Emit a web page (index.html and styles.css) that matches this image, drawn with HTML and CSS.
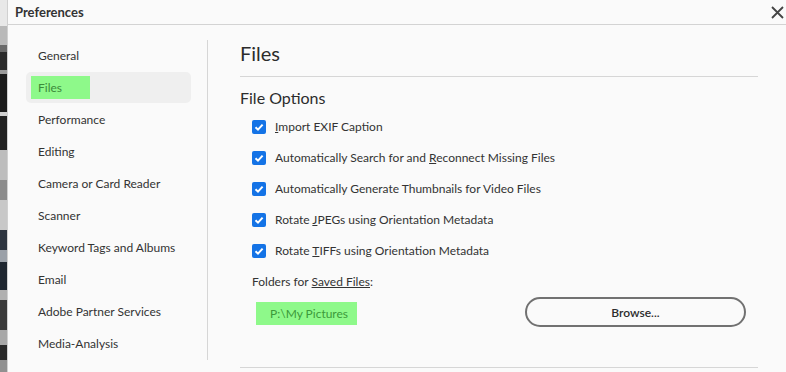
FILE: index.html
```html
<!DOCTYPE html>
<html lang="en">
<head>
    <meta charset="UTF-8">
    <title>Preferences</title>
    <link rel="stylesheet" href="styles.css">
</head>
<body>
    <div class="backdrop"></div>
    <div class="dialog">
        <div class="titlebar">
            <span class="title">Preferences</span>
            <span class="close">
                <svg width="13" height="13" viewBox="0 0 13 13"><path d="M1 1L12 12M12 1L1 12" stroke="#444" stroke-width="1.8" fill="none"/></svg>
            </span>
        </div>
        <div class="main">
            <ul class="sidebar">
                <li>General</li>
                <li class="selected"><span class="mark">Files</span></li>
                <li>Performance</li>
                <li>Editing</li>
                <li>Camera or Card Reader</li>
                <li>Scanner</li>
                <li>Keyword Tags and Albums</li>
                <li>Email</li>
                <li>Adobe Partner Services</li>
                <li>Media-Analysis</li>
            </ul>
            <div class="content">
                <h1>Files</h1>
                <h2>File Options</h2>
                <div class="options">
                    <label class="option"><span class="check"></span><span><u>I</u>mport EXIF Caption</span></label>
                    <label class="option"><span class="check"></span><span>Automatically Search for and <u>R</u>econnect Missing Files</span></label>
                    <label class="option"><span class="check"></span><span>Automatically Generate Thumbnails for Video Files</span></label>
                    <label class="option"><span class="check"></span><span>Rotate <u>J</u>PEGs using Orientation Metadata</span></label>
                    <label class="option"><span class="check"></span><span>Rotate <u>T</u>IFFs using Orientation Metadata</span></label>
                </div>
                <div class="folders">Folders for <u>Saved Files</u>:</div>
                <div class="folder-row">
                    <span class="path">P:\My Pictures</span>
                    <button class="browse">Browse...</button>
                </div>
                <div class="bottom-line"></div>
            </div>
        </div>
    </div>
</body>
</html>
```

FILE: styles.css
```css
body {
    margin: 0;
    display: flex;
    height: 372px;
    overflow: hidden;
    font-family: Lato, 'Open Sans', sans-serif;
    color: #2c2c2c;
    background: #fafafa;
}
.backdrop {
    width: 7px;
    flex: none;
    background: linear-gradient(to bottom,
        #e8e8e8 0 26px, #b9b9b9 26px 45px, #6a6a6a 45px 52px, #2b2b2b 52px 70px,
        #9a9a9a 70px 74px, #1c1c1c 74px 112px, #d0d0d0 112px 116px, #222 116px 150px,
        #bdbdbd 150px 180px, #8c8c8c 180px 200px, #c8c8c8 200px 230px, #2e3540 230px 250px,
        #9aa0a8 250px 262px, #1f2630 262px 290px, #b0b0b0 290px 300px, #3a3a3a 300px 330px,
        #a8a8a8 330px 345px, #2a2a2a 345px 360px, #909090 360px);
}
.dialog {
    flex: 1;
    border-left: 1px solid #d0d0d0;
    background: #fafafa;
}
.titlebar {
    height: 24px;
    border-bottom: 1px solid #d3d3d3;
    display: flex;
    align-items: center;
    justify-content: space-between;
    padding: 0 2px 0 7px;
}
.title {
    font-size: 13px;
    font-weight: bold;
    color: #333;
}
.close {
    display: flex;
}
.main {
    display: flex;
}
.sidebar {
    list-style: none;
    margin: 15px 0 0;
    padding: 0 16px 0 18px;
    width: 165px;
    border-right: 1px solid #d6d6d6;
    height: 320px;
}
.sidebar li {
    height: 32px;
    line-height: 32px;
    padding-left: 12px;
    font-size: 12px;
    color: #333;
}
.sidebar li.selected {
    background: #efefef;
    border-radius: 5px;
    height: 31px;
    margin-bottom: 1px;
    padding-left: 5px;
    display: flex;
    align-items: center;
}
.mark {
    background: #8ef98a;
    color: #3c8a3a;
    height: 23px;
    line-height: 23px;
    width: 52px;
    padding-left: 7px;
}
.content {
    flex: 1;
    padding: 0 28px 0 32px;
}
h1 {
    margin: 0;
    padding-top: 16px;
    height: 35px;
    font-size: 20px;
    font-weight: normal;
    color: #2c2c2c;
    border-bottom: 1px solid #d6d6d6;
}
h2 {
    margin: 0;
    padding-top: 11px;
    font-size: 16px;
    font-weight: normal;
    color: #2c2c2c;
    height: 23px;
}
.options {
    padding-left: 12px;
}
.option {
    display: flex;
    align-items: center;
    gap: 9px;
    height: 31px;
    font-size: 12px;
    color: #333;
}
.check {
    width: 14px;
    height: 14px;
    border-radius: 2px;
    background: #1473e6 url("data:image/svg+xml,%3Csvg xmlns='http://www.w3.org/2000/svg' viewBox='0 0 14 14'%3E%3Cpath d='M3.5 7.2L6 9.6L10.6 4.6' stroke='white' stroke-width='2' fill='none'/%3E%3C/svg%3E") center/14px no-repeat;
}
.folders {
    padding-left: 12px;
    margin-top: 8px;
    font-size: 12px;
    color: #333;
}
.folder-row {
    display: flex;
    align-items: center;
    justify-content: space-between;
    padding-left: 16px;
    margin-top: 8px;
}
.path {
    background: #8ef98a;
    color: #3c9a3a;
    font-size: 12px;
    height: 23px;
    line-height: 23px;
    padding: 0 9px 0 14px;
}
.browse {
    width: 221px;
    height: 30px;
    margin-right: 12px;
    margin-bottom: 2px;
    border: 2px solid #717171;
    border-radius: 15px;
    background: #fafafa;
    font-family: inherit;
    font-size: 12px;
    font-weight: 600;
    color: #2c2c2c;
}
.bottom-line {
    margin-top: 38px;
    border-top: 1px solid #d6d6d6;
}
```
